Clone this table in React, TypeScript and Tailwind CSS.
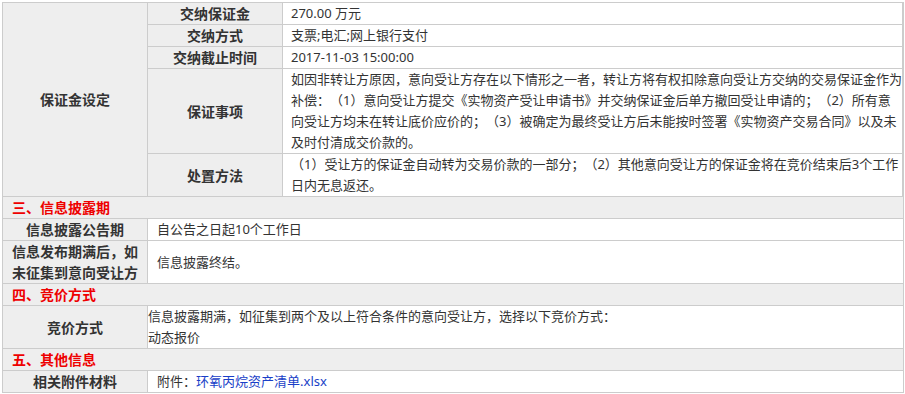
import React from "react";

const font = { fontFamily: '"Noto Sans", "Noto Sans CJK SC", sans-serif' };

type Line = string | React.ReactNode;

function Lines({ lines }: { lines: Line[] }) {
  return (
    <>
      {lines.map((l, i) => (
        <div key={i} className="whitespace-nowrap">
          {l}
        </div>
      ))}
    </>
  );
}

// rows inside the 保证金设定 block
const deposit: { label: string; lines: Line[] }[] = [
  { label: "交纳保证金", lines: ["270.00 万元"] },
  { label: "交纳方式", lines: ["支票;电汇;网上银行支付"] },
  { label: "交纳截止时间", lines: ["2017-11-03 15:00:00"] },
  {
    label: "保证事项",
    lines: [
      "如因非转让方原因，意向受让方存在以下情形之一者，转让方将有权扣除意向受让方交纳的交易保证金作为",
      "补偿：（1）意向受让方提交《实物资产受让申请书》并交纳保证金后单方撤回受让申请的；（2）所有意",
      "向受让方均未在转让底价应价的；（3）被确定为最终受让方后未能按时签署《实物资产交易合同》以及未",
      "及时付清成交价款的。",
    ],
  },
  {
    label: "处置方法",
    lines: [
      "（1）受让方的保证金自动转为交易价款的一部分；（2）其他意向受让方的保证金将在竞价结束后3个工作",
      "日内无息返还。",
    ],
  },
];

function Header({ text }: { text: string }) {
  return (
    <div className="border-b border-[#ccc] bg-[#eee] pl-[9px] text-[14px] font-bold leading-[21px] text-[#ee0000]">
      {text}
    </div>
  );
}

function Row({
  label,
  children,
  pad = "pl-[9px]",
}: {
  label: React.ReactNode;
  children: React.ReactNode;
  pad?: string;
}) {
  return (
    <div className="flex border-b border-[#ccc]">
      <div className="flex w-[145px] shrink-0 items-center justify-center border-r border-[#ccc] bg-[#eee] text-center text-[14px] font-bold leading-[21px] text-[#333]">
        <div>{label}</div>
      </div>
      <div className={`flex flex-1 flex-col justify-center overflow-hidden bg-white text-[13px] leading-[21px] text-[#333] ${pad}`}>
        {children}
      </div>
    </div>
  );
}

export default function App() {
  return (
    <div className="min-h-[394px] bg-white pl-[2px] pt-[2px] [text-spacing-trim:space-all]" style={font}>
      <div className="w-[902px] border-l border-r border-t border-[#ccc] bg-[#eee]">
        {/* 保证金设定 */}
        <div className="flex border-b border-[#ccc]">
          <div className="flex w-[145px] shrink-0 items-center justify-center border-r border-[#ccc] text-[14px] font-bold text-[#333]">
            保证金设定
          </div>
          <div className="flex-1 pr-[1px]">
            {deposit.map((r, i) => (
              <div
                key={r.label}
                className={`flex ${i < deposit.length - 1 ? "border-b border-[#ccc]" : ""}`}
              >
                <div className="flex w-[135px] shrink-0 items-center justify-center border-r border-[#ccc] bg-[#eee] text-[14px] font-bold leading-[21px] text-[#333]">
                  {r.label}
                </div>
                <div className="flex flex-1 flex-col justify-center overflow-hidden border-r border-[#ccc] bg-white pl-[8px] text-[13px] leading-[21px] text-[#333]">
                  <Lines lines={r.lines} />
                </div>
              </div>
            ))}
          </div>
        </div>

        <Header text="三、信息披露期" />
        <Row label="信息披露公告期">自公告之日起10个工作日</Row>
        <Row
          label={
            <>
              信息发布期满后，如
              <br />
              未征集到意向受让方
            </>
          }
        >
          信息披露终结。
        </Row>

        <Header text="四、竞价方式" />
        <Row label="竞价方式" pad="pl-0">
          <Lines
            lines={[
              "信息披露期满，如征集到两个及以上符合条件的意向受让方，选择以下竞价方式：",
              "动态报价",
            ]}
          />
        </Row>

        <Header text="五、其他信息" />
        <Row label="相关附件材料">
          <div className="whitespace-nowrap">
            附件：<a href="#" className="text-[#1a3fc8]">环氧丙烷资产清单.xlsx</a>
          </div>
        </Row>
      </div>
    </div>
  );
}
